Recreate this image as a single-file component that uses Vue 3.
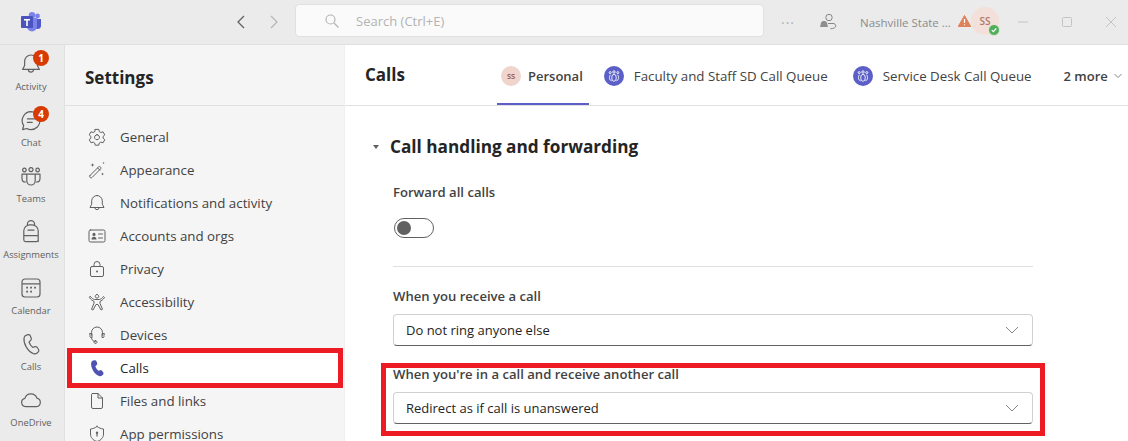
<template>
  <div class="app">
    <header class="titlebar">
      <div class="logo-cell">
        <svg width="22" height="20" viewBox="0 0 22 20">
          <circle cx="17.5" cy="4" r="2.4" fill="#7b83eb" />
          <path d="M13 7h8v6.5a3.6 3.6 0 0 1-7.2 0z" fill="#5059c9" />
          <circle cx="12" cy="3.2" r="3.2" fill="#7b83eb" />
          <path d="M7 6h10v8.5a5 5 0 0 1-10 0z" fill="#7b83eb" />
          <rect x="1" y="4" width="12" height="12" rx="1" fill="#4b53bc" />
          <path d="M4 7h6v1.4H7.8V14H6.2V8.4H4z" fill="#fff" />
        </svg>
      </div>
      <div class="nav-arrows">
        <svg width="12" height="16" viewBox="0 0 12 16"><path d="M9 2 3 8l6 6" class="line dark" /></svg>
        <svg width="12" height="16" viewBox="0 0 12 16"><path d="m3 2 6 6-6 6" class="line faint" /></svg>
      </div>
      <div class="search">
        <svg width="16" height="16" viewBox="0 0 16 16"><circle cx="6.5" cy="6.5" r="4.5" class="line faint" /><path d="m10 10 4.5 4.5" class="line faint" /></svg>
        <span>Search (Ctrl+E)</span>
      </div>
      <div class="dots">···</div>
      <svg class="bell-person" width="18" height="18" viewBox="0 0 18 18">
        <circle cx="10" cy="4.5" r="3.2" class="line mid" />
        <path d="M9 10.5h5c1.6 0 2.8 1 2.8 2.2 0 1.800-2.200 3-5.300 3" class="line mid" />
        <path d="M4.500 8A3 3 0 0 0 1.800 11l-.8 3h8l-.8-3a3 3 0 0 0-2.700-3zM3.500 15.500h2.500z" fill="#8f8f8f" />
      </svg>
      <span class="org">Nashville State ...</span>
      <svg class="warn" width="13" height="12" viewBox="0 0 13 12">
        <path d="M6.500.5 12.800 11.500H.2z" fill="#df8258" stroke="#df8258" stroke-linejoin="round" />
        <path d="M6.500 4v4M6.500 9.200v1" stroke="#fff" stroke-width="1.200" />
      </svg>
      <div class="me">
        SS
        <span class="presence">
          <svg width="8" height="8" viewBox="0 0 8 8"><path d="m1.800 4.200 1.500 1.500 3-3.200" fill="none" stroke="#fff" stroke-width="1.200" /></svg>
        </span>
      </div>
      <div class="win-btns">
        <svg width="12" height="12" viewBox="0 0 12 12"><path d="M1 6h10" class="line pale" /></svg>
        <svg width="12" height="12" viewBox="0 0 12 12"><rect x="1.500" y="1.500" width="9" height="9" rx="1" class="line pale" /></svg>
        <svg width="12" height="12" viewBox="0 0 12 12"><path d="m1 1 10 10M11 1 1 11" class="line pale" /></svg>
      </div>
    </header>

    <div class="body">
      <nav class="rail">
        <div v-for="item in railItems" :key="item.label" class="rail-item">
          <div class="rail-icon">
            <svg width="24" height="24" viewBox="0 0 20 20">
              <path v-if="icons[item.icon].s" :d="icons[item.icon].s" class="icon-s" />
              <path v-if="icons[item.icon].f" :d="icons[item.icon].f" class="icon-f" />
            </svg>
            <span v-if="item.badge" class="badge">{{ item.badge }}</span>
          </div>
          <span class="rail-label">{{ item.label }}</span>
        </div>
      </nav>

      <aside class="settings">
        <h1 class="settings-title">Settings</h1>
        <ul class="settings-list">
          <li v-for="item in settingsItems" :key="item.label" class="settings-row" :class="{ active: item.active }">
            <svg width="20" height="20" viewBox="0 0 20 20">
              <path v-if="icons[item.icon].s" :d="icons[item.icon].s" class="icon-s" />
              <path v-if="icons[item.icon].f" :d="icons[item.icon].f" class="icon-f" />
            </svg>
            <span>{{ item.label }}</span>
          </li>
        </ul>
      </aside>

      <main class="main">
        <div class="main-head">
          <h2 class="main-title">Calls</h2>
          <div class="tabs">
            <div class="tab current">
              <span class="tab-avatar">SS</span>
              <span>Personal</span>
            </div>
            <div v-for="queue in queues" :key="queue" class="tab">
              <svg class="queue" width="20" height="20" viewBox="0 0 20 20">
                <circle cx="10" cy="10" r="10" fill="#5b5fc7" />
                <g fill="none" stroke="#fff" stroke-width=".9">
                  <ellipse cx="10" cy="11.800" rx="2.300" ry="3.500" />
                  <path d="M6.300 8.800c-1.300 2.300-1.300 5.300 1.300 6M13.700 8.800c1.300 2.300 1.300 5.300-1.300 6" />
                  <circle cx="6.200" cy="6.600" r="1" />
                  <circle cx="10" cy="6" r="1.200" />
                  <circle cx="13.800" cy="6.600" r="1" />
                </g>
              </svg>
              <span>{{ queue }}</span>
            </div>
            <div class="more">
              2 more
              <svg width="8" height="6" viewBox="0 0 8 6"><path d="m.5 1 3.500 3.500L7.500 1" class="line mid" /></svg>
            </div>
          </div>
        </div>

        <section class="content">
          <div class="section-head">
            <span class="caret"></span>
            <h3>Call handling and forwarding</h3>
          </div>
          <div class="field-col">
            <label class="field-label">Forward all calls</label>
            <div class="toggle"><span class="knob"></span></div>
            <hr class="divider" />
            <label class="field-label">When you receive a call</label>
            <div class="select">
              <span>Do not ring anyone else</span>
              <svg width="14" height="8" viewBox="0 0 14 8"><path d="m1 1 6 6 6-6" class="line mid" /></svg>
            </div>
            <label class="field-label second">When you're in a call and receive another call</label>
            <div class="select">
              <span>Redirect as if call is unanswered</span>
              <svg width="14" height="8" viewBox="0 0 14 8"><path d="m1 1 6 6 6-6" class="line mid" /></svg>
            </div>
          </div>
        </section>
      </main>
    </div>

    <!-- red annotation boxes drawn on top of the screenshot -->
    <div class="mark mark-calls"></div>
    <div class="mark mark-waiting"></div>
  </div>
</template>

<script setup>
const bell = 'M10 2.500A5.300 5.300 0 0 0 4.700 7.800v3.400L3 14.500h14l-1.700-3.300V7.800A5.300 5.300 0 0 0 10 2.500zM7.800 14.500a2.200 2.200 0 0 0 4.400 0'

const icons = {
  bell: { s: bell },
  chat: {
    s: 'M10 3a7.500 7.500 0 0 1 0 15c-1.300 0-2.500-.3-3.500-.9L3 18l.9-3.400A7.500 7.500 0 0 1 10 3zM7 9h6M7 12h4',
  },
  teams: {
    s: 'M4.500 3.500a1.500 1.500 0 1 0 .01 0zM10 3a1.700 1.700 0 1 0 .01 0zM15.500 3.500a1.500 1.500 0 1 0 .01 0zM6.500 8.500h7v5.500a3.500 3.500 0 0 1-7 0zM6.500 8.500H2.500v3.500c0 1.800 1.200 3 3 3M13.500 8.500h4v3.500c0 1.800-1.200 3-3 3',
  },
  backpack: {
    s: 'M7 4.500V3.500a3 3 0 0 1 6 0v1M4 9a5 5 0 0 1 5-5h2a5 5 0 0 1 5 5v7.500a1.500 1.500 0 0 1-1.500 1.500h-9A1.500 1.500 0 0 1 4 16.500zM7.500 8.500h5M4 13h12v5',
  },
  calendar: {
    s: 'M5 2.500h10A2.500 2.500 0 0 1 17.500 5v10a2.500 2.500 0 0 1-2.500 2.500H5A2.500 2.500 0 0 1 2.500 15V5A2.500 2.500 0 0 1 5 2.500zM2.500 6.500h15',
    f: 'M6 9h1.500v1.500H6zM9.300 9h1.500v1.500H9.300zM12.600 9h1.500v1.500h-1.500zM6 12.300h1.500v1.500H6zM9.300 12.300h1.500v1.500H9.300z',
  },
  phone: {
    s: 'M6.200 2.600 7.600 2.200c.7-.2 1.400.1 1.700.8l.9 2.200c.2.600.1 1.200-.3 1.600L8.600 8.100c-.2.200-.2.400-.1.600.5 1.400 1.500 2.800 2.700 3.900.2.100.4.200.6.100l1.600-.5c.6-.2 1.200 0 1.600.5l1.300 1.900c.4.600.3 1.400-.2 1.900l-1 1c-.8.700-1.900 1-2.900.6-2.500-.9-4.600-2.900-6.200-5.700C4.400 9.600 3.900 7 4.200 5c.1-1.100.9-2.100 2-2.400z',
  },
  cloud: {
    s: 'M5.500 15.500a3.500 3.500 0 0 1-.6-6.900 5.300 5.300 0 0 1 10-.2 3.600 3.600 0 0 1-.3 7.100z',
  },
  gear: {
    s: 'M8.200 2.400h3.600l.5 2.200 1.500.9 2.200-.7 1.800 3.100-1.700 1.500v1.800l1.700 1.500-1.800 3.100-2.200-.7-1.500.9-.5 2.200H8.200l-.5-2.200-1.500-.9-2.200.7-1.800-3.100 1.700-1.500V9.400L2.200 7.900 4 4.800l2.200.7 1.500-.9zM10 7.700a2.500 2.500 0 1 0 .01 0z',
  },
  wand: {
    s: 'M3 15.500 11.500 7c.6-.6 1.500-.6 2 0s.5 1.400 0 2L5 17.500c-.5.500-1.300.5-1.900 0s-.6-1.400-.1-2zM10.500 8l2.500 2',
    f: 'M5.500 3l.5 1.500L7.500 5 6 5.500 5.500 7 5 5.500 3.500 5 5 4.500zM16.500 1.500l.3 1.200 1.200.3-1.200.3-.3 1.200-.3-1.200L15 3l1.200-.3zM15.500 12.500l.4 1.100 1.100.4-1.100.4-.4 1.100-.4-1.100-1.100-.4 1.100-.4z',
  },
  card: {
    s: 'M3.500 4h13A1.500 1.500 0 0 1 18 5.500v9a1.500 1.500 0 0 1-1.500 1.500h-13A1.500 1.500 0 0 1 2 14.500v-9A1.500 1.500 0 0 1 3.500 4zM11.500 8h4M11.500 12h4',
    f: 'M7 6.800a1.600 1.600 0 1 1 0 3.200 1.600 1.600 0 0 1 0-3.200zM4.500 13.500c0-1.800 1-2.800 2.500-2.800s2.500 1 2.500 2.800z',
  },
  lock: {
    s: 'M5 7.500h10A1.500 1.500 0 0 1 16.500 9v7a1.500 1.500 0 0 1-1.500 1.500H5A1.500 1.500 0 0 1 3.500 16V9A1.500 1.500 0 0 1 5 7.500zM7 7.500V5.500a3 3 0 0 1 6 0v2',
    f: 'M10 11.500a1 1 0 1 1 0 2 1 1 0 0 1 0-2z',
  },
  person: {
    s: 'M10 2.500a1.800 1.800 0 1 0 .01 0zM3.500 4.500c1.500 2 3 2.800 4 3h5c1-.2 2.500-1 4-3l1 1c-1.500 2.500-3.300 3.500-4.500 3.800v2l2.500 6-1.500.7-3-5.500h-2l-3 5.500-1.500-.7 2.500-6v-2C5.800 9 4 8 2.500 5.500z',
  },
  headset: {
    s: 'M4.500 10V7.500a5.500 5.500 0 0 1 11 0V10M3 8.500h2v4H3.500A1.500 1.500 0 0 1 3 11zM17 8.500h-2v4h1.500A1.500 1.500 0 0 0 17 11zM4.500 12.500c0 2.300 1.700 4 4 4.300M8.500 15.500a1.500 1.500 0 1 0 .01 0z',
  },
  phoneFill: {
    f: 'M6.200 2.600 7.600 2.200c.7-.2 1.400.1 1.700.8l.9 2.200c.2.600.1 1.200-.3 1.600L8.600 8.100c-.2.200-.2.400-.1.600.5 1.400 1.500 2.800 2.700 3.900.2.100.4.200.6.100l1.600-.5c.6-.2 1.200 0 1.600.5l1.300 1.900c.4.600.3 1.400-.2 1.900l-1 1c-.8.700-1.900 1-2.900.6-2.500-.9-4.600-2.900-6.200-5.700C4.400 9.600 3.900 7 4.200 5c.1-1.100.9-2.100 2-2.400z',
  },
  file: {
    s: 'M5.500 2.500H11l4.500 4.500v9A1.500 1.500 0 0 1 14 17.500H6A1.500 1.500 0 0 1 4.500 16V3.500a1 1 0 0 1 1-1zM11 2.500V7h4.500',
  },
  shield: {
    s: 'M10 2.500c2 1.500 4 2.200 6.500 2.500v5c0 3.500-2.300 6.200-6.500 7.500C5.800 16.200 3.500 13.500 3.500 10V5C6 4.700 8 4 10 2.500z',
    f: 'M10 7.500a1.300 1.300 0 0 1 .6 2.400V12.500H9.400V9.900A1.300 1.300 0 0 1 10 7.500z',
  },
}

const railItems = [
  { label: 'Activity', icon: 'bell', badge: 1 },
  { label: 'Chat', icon: 'chat', badge: 4 },
  { label: 'Teams', icon: 'teams' },
  { label: 'Assignments', icon: 'backpack' },
  { label: 'Calendar', icon: 'calendar' },
  { label: 'Calls', icon: 'phone' },
  { label: 'OneDrive', icon: 'cloud' },
]

const settingsItems = [
  { label: 'General', icon: 'gear' },
  { label: 'Appearance', icon: 'wand' },
  { label: 'Notifications and activity', icon: 'bell' },
  { label: 'Accounts and orgs', icon: 'card' },
  { label: 'Privacy', icon: 'lock' },
  { label: 'Accessibility', icon: 'person' },
  { label: 'Devices', icon: 'headset' },
  { label: 'Calls', icon: 'phoneFill', active: true },
  { label: 'Files and links', icon: 'file' },
  { label: 'App permissions', icon: 'shield' },
]

const queues = ['Faculty and Staff SD Call Queue', 'Service Desk Call Queue']
</script>

<style>
html,
body {
  margin: 0;
  background: #fff;
}
</style>

<style scoped>
.app {
  position: relative;
  width: 1128px;
  height: 441px;
  overflow: hidden;
  display: flex;
  flex-direction: column;
  font-family: 'Open Sans', 'Liberation Sans', sans-serif;
  font-size: 13px;
  color: #424242;
  background: #fff;
}

.line {
  fill: none;
  stroke-width: 1;
}
.line.dark { stroke: #616161; stroke-width: 1.3; }
.line.mid { stroke: #858585; }
.line.faint { stroke: #b5b5b5; stroke-width: 1.2; }
.line.pale { stroke: #c4c4c4; }

.titlebar {
  flex: 0 0 44px;
  height: 44px;
  box-sizing: content-box;
  display: flex;
  align-items: center;
  background: #ebebeb;
  border-bottom: 1px solid #e0e0e0;
}
.logo-cell {
  width: 62px;
  display: flex;
  justify-content: center;
}
.nav-arrows {
  margin-left: 173px;
  width: 45px;
  display: flex;
  justify-content: space-between;
}
.search {
  margin-left: 15px;
  width: 469px;
  height: 33px;
  box-sizing: border-box;
  margin-top: -3px;
  padding-left: 28px;
  display: flex;
  align-items: center;
  gap: 16px;
  background: #fafafa;
  border: 1px solid #e0e0e0;
  border-radius: 4px;
  color: #b3b3b3;
}
.dots {
  width: 16px;
  margin-left: 17px;
  color: #b0b0b0;
  font-size: 14px;
  letter-spacing: 1px;
}
.bell-person {
  margin-left: 22px;
}
.org {
  margin-left: 23px;
  width: 92px;
  font-size: 11.500px;
  color: #8c8c8c;
  white-space: nowrap;
}
.warn {
  margin-left: 6px;
  margin-top: -2px;
}
.me {
  position: relative;
  margin-top: -2px;
  width: 28px;
  height: 28px;
  border-radius: 50%;
  background: #f3e0da;
  color: #b07a69;
  font-size: 10px;
  font-weight: 600;
  display: flex;
  align-items: center;
  justify-content: center;
}
.presence {
  position: absolute;
  right: -1px;
  bottom: -1px;
  width: 10px;
  height: 10px;
  border-radius: 50%;
  background: #4fb05a;
  border: 1px solid #f3e0da;
  display: flex;
  align-items: center;
  justify-content: center;
}
.win-btns {
  margin-left: 18px;
  width: 100px;
  display: flex;
  justify-content: space-between;
  gap: 32px;
}

.body {
  flex: 1;
  min-height: 0;
  display: flex;
}

.rail {
  flex: 0 0 64px;
  background: #ebebeb;
  border-right: 1px solid #e0e0e0;
  display: flex;
  flex-direction: column;
}
.rail-item {
  flex: 0 0 56px;
  display: flex;
  flex-direction: column;
  align-items: center;
  padding-top: 7px;
  box-sizing: border-box;
}
.rail-icon {
  position: relative;
  width: 24px;
  height: 24px;
  margin-left: -2px;
}
.badge {
  position: absolute;
  top: -2px;
  right: -6px;
  width: 16px;
  height: 16px;
  border-radius: 50%;
  background: #d83b01;
  color: #fff;
  font-size: 10px;
  font-weight: 700;
  display: flex;
  align-items: center;
  justify-content: center;
}
.rail-label {
  margin-top: 4px;
  margin-left: -2px;
  font-size: 9.400px;
  line-height: 14px;
  color: #616161;
}

.icon-s {
  fill: none;
  stroke: #616161;
  stroke-width: 1;
  stroke-linejoin: round;
  stroke-linecap: round;
}
.icon-f {
  fill: #616161;
}

.settings {
  flex: 0 0 280px;
  background: #f5f5f5;
  border-right: 1px solid #f0f0f0;
  box-sizing: border-box;
  display: flex;
  flex-direction: column;
}
.settings-title {
  flex: 0 0 61px;
  margin: 0;
  box-sizing: border-box;
  padding: 21px 0 0 20px;
  border-bottom: 1px solid #e0e0e0;
  font-size: 17px;
  line-height: 24px;
  font-weight: 700;
  color: #242424;
}
.settings-list {
  list-style: none;
  margin: 0;
  padding: 14px 0 0;
}
.settings-row {
  height: 33px;
  box-sizing: border-box;
  padding-left: 22px;
  display: flex;
  align-items: center;
  gap: 13px;
  font-size: 13.300px;
  color: #424242;
}
.settings-row.active {
  margin: 0 2px;
  padding-left: 20px;
  background: #fff;
  color: #242424;
}
.settings-row.active .icon-f {
  fill: #4f52b2;
}

.main {
  flex: 1;
  min-width: 0;
  display: flex;
  flex-direction: column;
}
.main-head {
  flex: 0 0 61px;
  box-sizing: border-box;
  display: flex;
  padding-left: 20px;
  border-bottom: 1px solid #e0e0e0;
}
.main-title {
  margin: 0;
  width: 132px;
  padding-top: 18px;
  font-size: 17px;
  line-height: 24px;
  font-weight: 700;
  color: #242424;
}
.tabs {
  display: flex;
  height: 60px;
}
.tab {
  display: flex;
  align-items: center;
  gap: 10px;
  padding: 2px 0 0;
  margin-right: 25px;
  font-size: 13.300px;
  color: #424242;
  white-space: nowrap;
}
.tab.current {
  gap: 7px;
  padding: 2px 6px 0 4px;
  margin-right: 15px;
  font-size: 13px;
  font-weight: 600;
  box-shadow: inset 0 -2px 0 #5b5fc7;
}
.tab-avatar {
  width: 20px;
  height: 20px;
  border-radius: 50%;
  background: #efd5cb;
  color: #8a4a38;
  font-size: 7.500px;
  font-weight: 600;
  display: flex;
  align-items: center;
  justify-content: center;
}
.more {
  margin-left: 7px;
  padding-top: 2px;
  display: flex;
  align-items: center;
  gap: 6px;
  font-weight: 600;
  white-space: nowrap;
}

.content {
  padding: 29px 0 0 28px;
}
.section-head {
  display: flex;
  align-items: center;
  gap: 11px;
  height: 24px;
}
.caret {
  width: 0;
  height: 0;
  border-left: 3.500px solid transparent;
  border-right: 3.500px solid transparent;
  border-top: 4px solid #616161;
}
.section-head h3 {
  margin: 0;
  font-size: 17.200px;
  line-height: 24px;
  font-weight: 700;
  color: #242424;
}
.field-col {
  width: 640px;
  margin-left: 20px;
  padding-top: 23px;
  display: flex;
  flex-direction: column;
}
.field-label {
  line-height: 20px;
  font-size: 13.100px;
  font-weight: 600;
  color: #424242;
}
.toggle {
  margin-top: 16px;
  margin-left: 1px;
  width: 40px;
  height: 20px;
  box-sizing: border-box;
  border: 1px solid #616161;
  border-radius: 10px;
  display: flex;
  align-items: center;
  padding-left: 2px;
}
.knob {
  width: 14px;
  height: 14px;
  border-radius: 50%;
  background: #616161;
}
.divider {
  width: 100%;
  margin: 28px 0 19px;
  border: 0;
  border-top: 1px solid #e0e0e0;
}
.select {
  margin-top: 8px;
  height: 32px;
  box-sizing: border-box;
  padding: 0 13px 0 12px;
  display: flex;
  align-items: center;
  justify-content: space-between;
  border: 1px solid #d1d1d1;
  border-bottom-color: #616161;
  border-radius: 4px;
  color: #242424;
}
.field-label.second {
  margin-top: 18px;
}

.mark {
  position: absolute;
  box-sizing: border-box;
  border: 5px solid #ed1c24;
  pointer-events: none;
}
.mark-calls {
  left: 67px;
  top: 348px;
  width: 276px;
  height: 40px;
}
.mark-waiting {
  left: 381px;
  top: 363px;
  width: 664px;
  height: 73px;
}
</style>
